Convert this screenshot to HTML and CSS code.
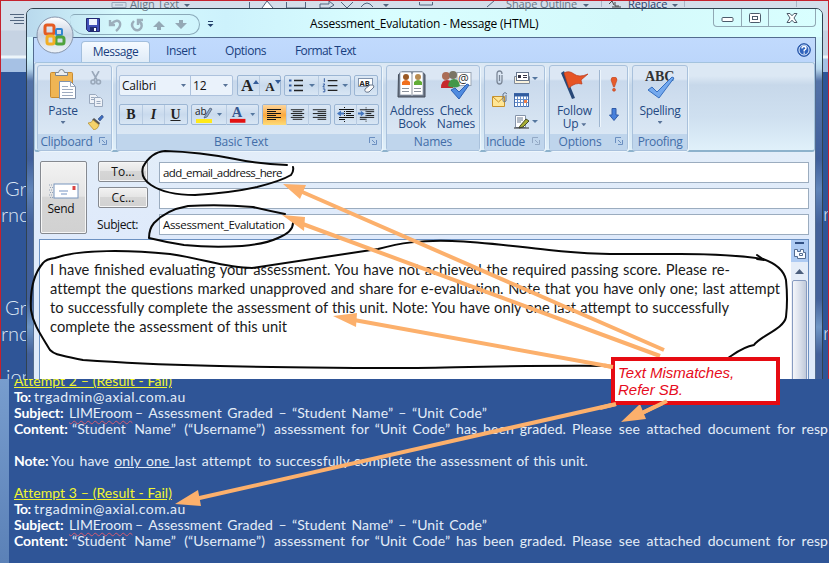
FILE: index.html
```html
<!DOCTYPE html>
<html lang="en">
<head>
<meta charset="utf-8">
<title>Assessment_Evalutation - Message (HTML)</title>
<link rel="stylesheet" href="styles.css">
</head>
<body>
<div class="stage">
  <section class="desktop">
    <div class="back-ribbon">
      <span class="back-label align-label">Align Text</span>
      <span class="back-label shape-label">Shape Outline</span>
      <span class="back-label replace-label">Replace</span>
      <svg class="back-art" width="829" height="72" viewBox="0 0 829 72" fill="none" stroke="#52657f">
        <path d="M10 14.500h14M14 17.500h10M10 20.500h14M14 23.500h10" />
        <path d="M112 2.500h14v5h-14zM115 5h8" stroke="#98a7bb"/>
        <path d="M249.500 2v6M286.500 2v6M305.500 2v6h-19M320 4h9v-3l5 4-5 3h-9zM341 2l6 6 6-6M361 7q6-8 12 0M419.500 2v3h13v-3M487 7l8-7"/>
        <path d="M262 8l5-7 6 7" fill="#fff"/>
        <path d="M383 4h6l-3 3zM583 4h6l-3 3zM672 4h6l-3 3zM184 4h6l-3 3z" fill="#52657f" stroke="none"/>
        <path d="M796.500 1v6M601.500 1v6M684.500 1v6" stroke="#a9b6c8"/>
        <path d="M609 4l3-3 2 4M615 2v4h4M612 7h9" stroke="#444"/>
      </svg>
    </div>
    <div class="back-text left-a"><span>Gr</span><br>rnc</div>
    <div class="back-text left-b"><span>Gr</span><br>rnc</div>
    <div class="back-text left-c">ion</div>
    <div class="back-text right-a">r</div>
    <div class="back-text right-b">r</div>

    <div class="window">
      <header class="titlebar">
        <div class="quick-access">
          <svg width="14" height="14" viewBox="0 0 14 14"><path d="M.5.500h13v13h-11l-2-2z" fill="#4150b8" stroke="#22276f"/><path d="M3 1h8v6H3z" fill="#eef4ff"/><path d="M4 9h7v5H4z" fill="#222c70"/><path d="M8 10h2v3H8z" fill="#fff"/></svg>
          <svg width="14" height="14" viewBox="0 0 14 14" fill="none" stroke="#9caebb" stroke-width="2.400"><path d="M2 2v5h5M3 6q7-6 9-1 1 4-4 8"/></svg>
          <svg width="14" height="14" viewBox="0 0 14 14" fill="none" stroke="#9caebb" stroke-width="2.400"><path d="M4 3Q0 7 4 11q4 3 7-1 2-4-2-7M8 7V2h5"/></svg>
          <svg width="14" height="14" viewBox="0 0 14 14" fill="#94a8b5"><path d="M7 3l6 6H9v3H5V9H1z"/></svg>
          <svg width="14" height="14" viewBox="0 0 14 14" fill="#94a8b5"><path d="M7 11l6-6H9V2H5v3H1z"/></svg>
        </div>
        <svg class="more" width="7" height="7" viewBox="0 0 7 7"><path d="M1 .500h5" stroke="#25416b"/><path d="M.5 3h6l-3 3z" fill="#25416b"/></svg>
        <h1 class="title">Assessment_Evalutation - Message (HTML)</h1>
        <div class="controls">
          <span class="ctl min"><svg width="13" height="7" viewBox="0 0 13 7"><rect x="1" y="1.500" width="11" height="4" rx="1" fill="#fff" stroke="#4c5b6b"/></svg></span>
          <span class="ctl max"><svg width="12" height="10" viewBox="0 0 12 10"><rect x=".5" y=".5" width="11" height="9" rx="1" fill="#fff" stroke="#4c5b6b"/><rect x="3.500" y="3.500" width="5" height="3" fill="#fff" stroke="#4c5b6b"/></svg></span>
          <span class="ctl close"><svg width="12" height="10" viewBox="0 0 12 10"><path d="M1 .500h3l2 2.300 2-2.300h3L8 5l3 4.500H8L6 7.200 4 9.500H1L4 5z" fill="#fff" stroke="#4c5b6b"/></svg></span>
        </div>
      </header>

      <div class="client">
        <nav class="tabs">
          <span class="tab active">Message</span>
          <span class="tab insert">Insert</span>
          <span class="tab options">Options</span>
          <span class="tab format">Format Text</span>
          <svg class="help" width="14" height="14" viewBox="0 0 14 14"><circle cx="7" cy="7" r="6.300" fill="#2f63bd" stroke="#1c4a9d"/><circle cx="7" cy="7" r="5" fill="none" stroke="#e4f0ff"/><path d="M5 5.500q0-2 2-2t2 1.700Q9 6.500 7.200 7.200V8.500M7.200 9.400v1.300" fill="none" stroke="#fff" stroke-width="1.400"/></svg>
        </nav>

        <div class="ribbon">
          <section class="group clipboard">
            <div class="group-body">
              <div class="big paste">
                <svg width="28" height="31" viewBox="0 0 28 31"><rect x="1.500" y="3.500" width="22" height="25" rx="1" fill="#f0b554" stroke="#c98c32"/><path d="M6.500 6.500v-3h3Q10 .500 12.500.500T15.500 3.500h3v3z" fill="#e9edf2" stroke="#7b8693"/><path d="M10.500 12.500h11l5 5v12h-16z" fill="#fff" stroke="#8293ac"/><path d="M21.500 12.500v5h5M13 17.500h6M13 20.500h11M13 23.500h11M13 26.500h11" fill="none" stroke="#9eabc0"/></svg>
                <span>Paste</span><i class="caret"></i>
              </div>
              <div class="small-col">
                <svg width="12" height="14" viewBox="0 0 12 14" fill="none" stroke="#9aa8ba" stroke-width="1.600"><path d="M2 0l5 9M9 0L4 9"/><circle cx="3" cy="11" r="2"/><circle cx="8.500" cy="11" r="2"/></svg>
                <svg width="16" height="14" viewBox="0 0 16 14" fill="#eef2f8" stroke="#9aa9be"><path d="M1.500 1.500h6l2 2v7h-8z"/><path d="M6.500 4.500h6l2 2v7h-8zM3 4.500h3M3 6.500h3M8.500 8.500h4M8.500 10.500h4"/></svg>
                <svg width="16" height="15" viewBox="0 0 16 15"><path d="M10 4l4-4 1.500 2L12 6z" fill="#3c6cc0" stroke="#2a3f6d" stroke-width=".5"/><path d="M6 3l6 5-1 2-7-5z" fill="#555"/><path d="M5 5l6 5q-1 4-5 5L0 8q4 0 5-3z" fill="#f5d36a" stroke="#b28b2b" stroke-width=".7"/></svg>
              </div>
            </div>
            <footer>Clipboard<svg class="launch" width="8" height="8" viewBox="0 0 8 8"><path d="M.5 6V.500H6M7.500 3v4.500H3M3 3l3 3" fill="none" stroke="#6b8fc0"/></svg></footer>
          </section>

          <section class="group basic">
            <div class="group-body rows">
              <div class="row">
                <div class="combo"><span class="font-name">Calibri<i class="caret"></i></span><span class="font-size">12<i class="caret"></i></span></div>
                <div class="set grow">
                  <b class="serif big-a">A<svg width="6" height="4" viewBox="0 0 6 4"><path d="M3 0l3 4H0z" fill="#345c99"/></svg></b>
                  <b class="serif small-a">A<svg width="6" height="4" viewBox="0 0 6 4"><path d="M0 0h6L3 4z" fill="#345c99"/></svg></b>
                </div>
                <div class="set lists">
                  <svg width="33" height="20" viewBox="0 0 33 20"><path d="M9 4.500h9M9 9.500h9M9 14.500h9" stroke="#222" stroke-width="1.300"/><path d="M4 4.500h2.500M4 9.500h2.500M4 14.500h2.500" stroke="#315aa0" stroke-width="2.200"/><path d="M24 8h6l-3 3z" fill="#55779f"/></svg>
                  <svg width="33" height="20" viewBox="0 0 33 20"><path d="M9 4.500h10M9 9.500h10M9 14.500h10" stroke="#222" stroke-width="1.300"/><path d="M5.500 2v4M4 8h2l-2 3h2M4 13h2v3H4" stroke="#315aa0" fill="none"/><path d="M24 8h6l-3 3z" fill="#55779f"/></svg>
                </div>
                <div class="set styles"><svg width="22" height="20" viewBox="0 0 22 20"><rect x="3.500" y="2.500" width="14" height="8" fill="#fff" stroke="#8193ad"/><text x="4.500" y="9.500" font-family="Open Sans" font-size="7.500" font-weight="700" fill="#222">AB</text><path d="M10 13l5-4q4-1 4 2l-5 5q-5 1-4-3z" fill="#fafafa" stroke="#67768c"/></svg></div>
              </div>
              <div class="row second">
                <div class="set biu"><b class="serif">B</b><b class="serif it">I</b><b class="serif un">U</b></div>
                <div class="set colors">
                  <svg width="34" height="20" viewBox="0 0 34 20"><text x="3" y="10" font-family="Open Sans" font-size="10" fill="#222">ab</text><path d="M18 3l-5 8-1 2 3-1 5-8z" fill="#8ea6c8" stroke="#46566d" stroke-width=".7"/><path d="M4 14h16v4H4z" fill="#ffe91a"/><path d="M25 8h5l-2.500 3z" fill="#55779f"/></svg>
                  <svg width="33" height="20" viewBox="0 0 33 20"><text x="5" y="12" font-family="Liberation Serif" font-size="15" font-weight="700" fill="#35568f">A</text><path d="M3 14h16v4H3z" fill="#e31212"/><path d="M24 8h5l-2.500 3z" fill="#55779f"/></svg>
                </div>
                <div class="set aligns">
                  <svg class="on" width="23" height="20" viewBox="0 0 23 20" stroke="#151515"><path d="M4 4.500h14M4 6.500h9M4 8.500h14M4 10.500h9M4 12.500h14M4 14.500h9"/></svg>
                  <svg width="22" height="20" viewBox="0 0 22 20" stroke="#151515"><path d="M4 4.500h14M6 6.500h10M4 8.500h14M6 10.500h10M4 12.500h14M6 14.500h10"/></svg>
                  <svg width="22" height="20" viewBox="0 0 22 20" stroke="#151515"><path d="M4 4.500h14M9 6.500h9M4 8.500h14M9 10.500h9M4 12.500h14M9 14.500h9"/></svg>
                </div>
                <div class="set indents">
                  <svg width="21" height="20" viewBox="0 0 21 20" stroke="#151515"><path d="M4 4.500h15M11 6.500h8M11 8.500h5M11 10.500h8M4 12.500h15M4 14.500h6"/><path d="M9.500 2v15" stroke-dasharray="1 1"/><path d="M2 8.500l4-3v2h3v2H6v2z" fill="#4475bd" stroke="none"/></svg>
                  <svg width="21" height="20" viewBox="0 0 21 20" stroke="#151515"><path d="M3 4.500h15M10 6.500h8M10 8.500h5M10 10.500h8M3 12.500h15M3 14.500h6"/><path d="M9.500 2v15" stroke-dasharray="1 1"/><path d="M8 8.500l-4-3v2H1v2h3v2z" fill="#4475bd" stroke="none"/></svg>
                </div>
              </div>
            </div>
            <footer>Basic Text<svg class="launch" width="8" height="8" viewBox="0 0 8 8"><path d="M.5 6V.500H6M7.500 3v4.500H3M3 3l3 3" fill="none" stroke="#6b8fc0"/></svg></footer>
          </section>

          <section class="group names">
            <div class="group-body">
              <div class="big address">
                <svg width="30" height="30" viewBox="0 0 30 30"><path d="M1.500 4.500L5 2h20l3 2.500V27h-27z" fill="#6c7685" stroke="#444d5b"/><path d="M3 2h11l1 2 1-2h10v23H16l-1 1-1-1H3z" fill="#fff" stroke="#8290a4" stroke-width=".7"/><path d="M15 3v22M5 18.500h7M5 21.500h7M17 18.500h7M17 21.500h7" stroke="#8b929d"/><circle cx="9" cy="7" r="3" fill="#9b5a25"/><path d="M5 15v-3q4-4 8 0v3z" fill="#f1701e"/><circle cx="21" cy="7" r="3" fill="#b88b50"/><path d="M17 15v-3q4-4 8 0v3z" fill="#62ad36"/></svg>
                <span>Address<br>Book</span>
              </div>
              <div class="big check">
                <svg width="32" height="30" viewBox="0 0 32 30"><rect x="17" y="2.500" width="14" height="13" fill="#fff" stroke="#9aa6b5"/><text x="18" y="13" font-family="Open Sans" font-size="12" fill="#333">@</text><circle cx="6" cy="6" r="4" fill="#aa6d57"/><path d="M1 18q0-8 6-8t6 8z" fill="#c6292d"/><circle cx="13" cy="5" r="4" fill="#7a7464"/><path d="M8 16q1-7 6-7t6 7q-6 3-12 0z" fill="#429748"/><path d="M11 20l4-2 4 4 8-8 2 1-10 14z" fill="#4f8be0" stroke="#2c60b4"/></svg>
                <span>Check<br>Names</span>
              </div>
            </div>
            <footer>Names</footer>
          </section>

          <section class="group include">
            <div class="group-body include-grid">
              <svg width="18" height="16" viewBox="0 0 18 16" fill="none" stroke="#7b8797" stroke-width="1.300"><path d="M11 5v6q0 3-2.500 3T6 11V4q0-3 2.500-3T11 4M8.500 5v6"/></svg>
              <svg width="28" height="16" viewBox="0 0 28 16"><path d="M1.500 6.500v7h15v-7z" fill="#f8f1dc" stroke="#808b9b"/><rect x="3.500" y="2.500" width="12" height="8" fill="#fff" stroke="#65758c"/><path d="M5 5h3v3H5zM10 5h4v1h-4zM10 7h4v1h-4z" fill="#334"/><path d="M19 7h6l-3 3z" fill="#55779f"/></svg>
              <svg width="18" height="16" viewBox="0 0 18 16"><path d="M1.500 4.500h12v10h-12z" fill="#ffe695" stroke="#c7922d"/><path d="M2 5l5.500 5L13 5" fill="none" stroke="#c7922d"/><path d="M15 3v6q-3 2-3-1V2q2-3 4 0" fill="none" stroke="#66758a"/></svg>
              <svg width="28" height="17" viewBox="0 0 28 17"><rect x="1.500" y="1.500" width="14" height="13" fill="#fff" stroke="#476fae"/><path d="M1 3h15" stroke="#315c9f" stroke-width="3"/><path d="M4.500 4v11M7.500 4v11M10.500 4v11M13.500 4v11M2 7.500h13M2 10.500h13" stroke="#638bc8"/><path d="M11 8h3v3h-3z" fill="#ef7e47"/></svg>
              <span></span>
              <svg width="28" height="16" viewBox="0 0 28 16"><path d="M2.500 1.500h10v12h-10z" fill="#fff" stroke="#8594aa"/><path d="M4 4h6M4 6h6M4 8h4" stroke="#68788e"/><path d="M7 12l6-7 3 2-6 6-4 1z" fill="#a6ad34" stroke="#444b28"/><path d="M1 14h15" stroke="#333"/><path d="M19 6h6l-3 3z" fill="#55779f"/></svg>
            </div>
            <footer>Include<svg class="launch" width="8" height="8" viewBox="0 0 8 8"><path d="M.5 6V.500H6M7.500 3v4.500H3M3 3l3 3" fill="none" stroke="#93a9c5"/></svg></footer>
          </section>

          <section class="group opts">
            <div class="group-body">
              <div class="big follow">
                <svg width="30" height="30" viewBox="0 0 30 30"><path d="M1 3l3-2 11 27-3 1z" fill="#284878"/><path d="M4 3q5-3 10 1t14 0l-7 6 1 4q-7-2-13 4z" fill="#e65425" stroke="#ba391b" stroke-width=".7"/></svg>
                <span>Follow<br>Up <i class="caret inline"></i></span>
              </div>
              <div class="flags">
                <svg width="8" height="15" viewBox="0 0 8 15" fill="#e65b2b" stroke="#b63d1b" stroke-width=".5"><path d="M1 3q0-3 3-3t3 3L4.500 10h-1z"/><circle cx="4" cy="12.800" r="1.500"/></svg>
                <svg width="10" height="13" viewBox="0 0 10 13"><path d="M3 .500h4V7h2.500L5 12.500.500 7H3z" fill="#4780dc" stroke="#315ba6"/></svg>
              </div>
            </div>
            <footer>Options<svg class="launch" width="8" height="8" viewBox="0 0 8 8"><path d="M.5 6V.500H6M7.500 3v4.500H3M3 3l3 3" fill="none" stroke="#6b8fc0"/></svg></footer>
          </section>

          <section class="group proof">
            <div class="group-body">
              <div class="big spelling">
                <svg width="32" height="30" viewBox="0 0 32 30"><text x="1" y="11" font-family="Liberation Serif" font-size="14" font-weight="700" textLength="29" fill="#333">ABC</text><path d="M4 20l4-3 5 5L28 7l2 1-15 20z" fill="#74a9ee" stroke="#356ec0"/></svg>
                <span>Spelling</span><i class="caret"></i>
              </div>
            </div>
            <footer>Proofing</footer>
          </section>
        </div>

        <div class="mail-header">
          <button class="send"><svg width="30" height="16" viewBox="0 0 30 16"><rect x="5" y="1" width="24" height="14" fill="#fff" stroke="#7995bd"/><path d="M10 8h9M12 11h6" stroke="#7493c2"/><path d="M23.500 3h3v4h-3z" fill="#d94545"/><path d="M0 2h4M1 4.500h3M0 7h4M1 9.500h3M0 12h4M1 14.500h3" stroke="#93a1b5" stroke-dasharray="1 1"/></svg><span>Send</span></button>
          <div class="fields">
            <button class="pick">To...</button><div class="input"><span class="to-text">add_email_address_here</span></div>
            <button class="pick">Cc...</button><div class="input"></div>
            <label>Subject:</label><div class="input"><span class="subject-text">Assessment_Evalutation</span></div>
          </div>
        </div>

        <div class="editor">
          <div class="copy">
            <p class="l1">I have finished evaluating your assessment. You have not achieved the required passing score. Please re-</p>
            <p class="l2">attempt the questions marked unapproved and share for e-evaluation. Note that you have only one; last attempt</p>
            <p class="l3">to successfully complete the assessment of this unit. Note: You have only one last attempt to successfully</p>
            <p class="l4">complete the assessment of this unit</p>
          </div>
          <div class="scroll">
            <div class="ruler"><svg width="17" height="22" viewBox="0 0 17 22"><path d="M4 3h9" stroke="#304f83" stroke-width="2"/><path d="M3.500 9.500h3v2h3v-2h3v3h2v6h-8v-2h-3z" fill="#f8fbff" stroke="#536b91"/><path d="M8.500 13.500h3v2h-3z" fill="none" stroke="#536b91"/></svg></div>
            <div class="up"><svg width="9" height="5" viewBox="0 0 9 5"><path d="M4.500 0L9 5H0z" fill="#4c5f7d"/></svg></div>
            <div class="thumb"></div>
          </div>
        </div>
      </div>
      <svg class="orb" width="38" height="38" viewBox="0 0 38 38"><defs><linearGradient id="orb" x2="0" y2="1"><stop stop-color="#fff"/><stop offset=".5" stop-color="#c9d3e2"/><stop offset="1" stop-color="#eef4fa"/></linearGradient></defs><circle cx="19" cy="19" r="18" fill="url(#orb)" stroke="#8796ad"/><g fill="none" stroke-width="3"><rect x="9" y="9" width="9" height="9" rx="2" stroke="#e45b22"/><rect x="20" y="13" width="6" height="6" rx="1" stroke="#3286cf" stroke-width="2"/><rect x="20" y="21" width="8" height="7" rx="2" stroke="#4fa33d"/><rect x="11" y="20" width="7" height="8" rx="2" stroke="#f2ae25"/></g></svg>
    </div>
  </section>

  <section class="notes">
    <p class="attempt"><u>Attempt 2 – (Result - Fail)</u></p>
    <p><b class="to">To:</b><span class="mail">trgadmin@axial.com.au</span></p>
    <p><b class="subj">Subject:</b><span class="lime">LIMEroom</span><span class="subj-rest">– Assessment Graded – “Student Name” – “Unit Code”</span></p>
    <p><b class="cont">Content:</b><span class="cont-a">“Student Name” (“Username”)</span><span class="cont-b">assessment for “Unit Code” has been graded.</span><span class="cont-c">Please see attached document for resp</span></p>
    <p></p>
    <p><b class="note">Note:</b><span class="note-a">You have <u>only one </u>last attempt</span><span class="note-b">to successfully complete the assessment of this unit.</span></p>
    <p></p>
    <p class="attempt"><u>Attempt 3 – (Result - Fail)</u></p>
    <p><b class="to">To:</b><span class="mail">trgadmin@axial.com.au</span></p>
    <p><b class="subj">Subject:</b><span class="lime">LIMEroom</span><span class="subj-rest">– Assessment Graded – “Student Name” – “Unit Code”</span></p>
    <p><b class="cont">Content:</b><span class="cont-a">“Student Name” (“Username”)</span><span class="cont-b">assessment for “Unit Code” has been graded.</span><span class="cont-c">Please see attached document for resp</span></p>
  </section>

  <svg class="ink" width="829" height="563" viewBox="0 0 829 563" fill="none">
    <g stroke="#080808" stroke-width="2" stroke-linecap="round" stroke-linejoin="round">
      <path d="M287 165Q260 164 235 159Q200 152 165 151Q151 152 143 167Q140 178 151 185Q166 195 195 195Q230 193 257 187Q281 181 291 175Q294 171 293 167"/>
      <path d="M285 214Q270 211 253 207Q220 204 188 206Q166 210 154 223Q149 229 149 238Q165 242 184 245Q212 248 242 246Q265 244 278 238Q293 232 293 223"/>
      <path d="M55 258C80 249 130 250 170 254C205 259 225 268 252 268C285 263 330 256 378 249C400 243 420 240 452 241C485 242 510 246 549 250C590 255 630 254 680 254Q730 254 763 259Q783 266 786 280Q788 300 786 317C784 329 760 336 754 345C742 347 733 355 728 358M612 366C490 365 430 369 370 368C280 367 180 367 83 360C60 355 55 355 50 350C41 335 33 324 31 310C30 292 32 276 43 263Q46 259 55 258"/>
      <path d="M757 255l7 5-7-1"/>
    </g>
    <path d="M302 227.500h1" stroke="#333"/>
    <path d="M664 350L300 191M660 356L300 223M613 367L354 320M616 404L195 499M667 401L640 414" stroke="#fcb06c" stroke-width="4"/>
    <g fill="#fcb06c"><path d="M283 184l23 1-6 14zM282 215l23 2-1 14zM333 316l24-3-1 14zM175 504l23-14 3 16zM621 422l19-18 6 15z"/></g>
  </svg>
  <aside class="callout">Text Mismatches,<br>Refer SB.</aside>
  <svg class="ink" width="829" height="563" viewBox="0 0 829 563" fill="none"><path d="M667 401L640 414M616 404L600 408M613 367L604 365.500" stroke="#fcb06c" stroke-width="4"/></svg>
</div>
</body>
</html>
```
FILE: styles.css
```css
* { box-sizing: border-box; }
body { margin: 0; overflow: hidden; }
h1, p { margin: 0; font-weight: 400; }
svg { display: block; flex: none; }
.stage { position: relative; width: 829px; height: 563px; overflow: hidden; font: 12px/14px "Open Sans", sans-serif; background: #2f5597; }

.desktop { position: relative; height: 379px; overflow: hidden; background: #2f5597; border: solid #c5212d; border-width: 1px 1px 0 1px; }
.back-ribbon { height: 71px; background: linear-gradient(#d4deea 0 29px, #c6d3e3 30px 54px, #edf5fa 55px 57px, #a6c1e4 58px); }
.back-art { position: absolute; left: -1px; top: -1px; }
.back-label { position: absolute; top: -4px; color: #687686; font-size: 11px; letter-spacing: -.1px; white-space: nowrap; z-index: 1; }
.align-label { left: 129px; }
.shape-label { left: 505px; }
.replace-label { left: 627px; color: #2a3d6b; }
.back-text { position: absolute; color: #dce6f3; font: 300 20px/26px Lato, sans-serif; }
.left-a { left: 0; top: 174px; }
.left-b { left: 0; top: 293px; }
.back-text span { padding-left: 4px; }
.left-c { left: 5px; top: 362px; }
.right-a { left: 822px; top: 199px; }
.right-b { left: 822px; top: 318px; }

.window { position: absolute; left: 25px; top: 7px; width: 797px; height: 400px; padding: 0 6px; border: 1px solid #304250; border-radius: 7px 7px 0 0; background: linear-gradient(#d3f6fc 0 30px, #c9edf8 50px, #b7d6ec 60px, #5473a8 72px, #405f9b 150px, #5f84b9 180px, #42609a 215px, #42609a 290px, #6f96c5 318px, #42609a 345px); }
.titlebar { display: flex; align-items: flex-start; height: 28px; margin: 0 -6px; background: linear-gradient(90deg, #b9d9ed, #d6fafd 12%, #cdf2fc 25%, #d9feff 45%, #d4f9fb 75%, #d9ffff); border-radius: 6px 6px 0 0; }
.quick-access { display: flex; align-items: center; gap: 8px; width: 130px; height: 21px; margin: 5px 0 0 43px; padding-left: 16px; border: 1px solid #8aa9b9; border-left: 0; border-radius: 5px 11px 11px 16px; }
.more { margin: 12px 0 0 7px; }
.title { width: 229px; margin: 7px 0 0 96px; font-size: 12px; line-height: 16px; letter-spacing: -.2px; white-space: nowrap; }
.controls { display: flex; width: 103px; height: 18px; margin: 0 0 0 174px; border: 1px solid #90a8b4; border-top: 0; border-radius: 0 0 4px 4px; }
.ctl { display: grid; place-items: center; width: 28px; border-right: 1px solid #90a8b4; }
.ctl.min { align-items: end; padding-bottom: 3px; }
.ctl.max { width: 27px; }
.ctl.close { flex: 1; border: 0; }
.orb { position: absolute; left: 9px; top: 7px; }

.client { border: 1px solid #536c8f; border-bottom: 0; width: 783px; height: 380px; background: #dfeafa; }
.tabs { display: flex; align-items: flex-start; height: 24px; padding-left: 47px; color: #183e7e; line-height: 20px; background: linear-gradient(#c1dafd, #bcd6fb); white-space: nowrap; }
.tab { flex: none; margin-top: 3px; letter-spacing: -.2px; }
.tab.active { width: 69px; height: 21px; text-align: center; letter-spacing: -.45px; border: 1px solid #a3bfdd; border-bottom: 0; border-radius: 4px 4px 0 0; background: linear-gradient(#f5faff, #dfebf7); }
.tab.insert { margin-left: 16px; width: 59px; letter-spacing: -.4px; }
.tab.options { width: 70px; letter-spacing: -.45px; }
.tab.format { width: 60px; letter-spacing: -.6px; }
.help { margin: 5px 0 0 442px; }

.ribbon { display: flex; gap: 4px; height: 90px; padding: 3px; border: 1px solid #a4c3de; border-bottom: 2px solid #8db2cc; border-radius: 3px; background: linear-gradient(#dce8f4 0 13px, #c7d8ea 22px, #cfe0f0 55px, #e0f0fa); font-size: 12px; color: #244982; }
.group { display: flex; flex-direction: column; height: 86px; margin-top: -1px; border: 1px solid #a9c1dc; border-radius: 3px; background: linear-gradient(#dce7f4 0 13px, #c9d9ec 15px, #dae7f4 68px); box-shadow: 1px 1px 0 #edf6fc; flex: none; }
.group-body { display: flex; height: 68px; }
.group footer { position: relative; height: 16px; color: #426da8; background: #bfd5ec; line-height: 16px; text-align: center; letter-spacing: -.2px; white-space: nowrap; }
.launch { position: absolute; right: 4px; top: 3px; }
.clipboard { width: 75px; margin-left: -1px; }
.clipboard footer { padding-right: 16px; letter-spacing: -.25px; }
.basic { width: 266px; }
.basic footer { padding-right: 16px; }
.names { width: 94px; }
.include { width: 61px; }
.include footer { padding-right: 18px; letter-spacing: -.3px; }
.opts { width: 79px; }
.opts footer { padding-right: 17px; }
.proof { width: 56px; }
.proof footer { letter-spacing: -.35px; }
.big { display: flex; flex-direction: column; align-items: center; padding-top: 4px; line-height: 13px; text-align: center; letter-spacing: -.2px; white-space: nowrap; }
.big span { margin-top: 4px; }
.caret { display: block; width: 5px; height: 3px; background: #587398; clip-path: polygon(0 0, 100% 0, 50% 100%); }
.caret.inline { display: inline-block; vertical-align: middle; }
.big > .caret { margin-top: 4px; }
.paste { width: 50px; padding-top: 3px; }
.small-col { display: flex; flex-direction: column; align-items: center; gap: 8px; width: 16px; padding-top: 5px; }
.address { width: 50px; }
.check { width: 38px; }
.follow { width: 49px; }
.spelling { width: 54px; letter-spacing: -.35px; }
.flags { display: flex; flex-direction: column; align-items: center; gap: 16px; width: 28px; height: 57px; margin-top: 4px; padding-top: 7px; border-left: 1px solid #9fb6d0; box-shadow: inset 1px 0 #edf5fc; }
.include-grid { display: grid; grid-template-columns: 22px 30px; grid-template-rows: 22px 22px 20px; padding: 4px 0 0 6px; }

.rows { flex-direction: column; padding: 9px 0 0 2px; }
.row { display: flex; }
.row.second { margin-top: 8px; }
.set, .combo { display: flex; height: 21px; border: 1px solid #9cb6d4; border-radius: 2px; background: linear-gradient(#dce8f5, #c9daed 50%, #d8e6f4); color: #222; }
.set > * + * { border-left: 1px solid #b8cbe1; }
.set b { display: grid; place-items: center; width: 22px; font-size: 14px; }
.serif { font-family: "Liberation Serif", serif; }
.combo { width: 114px; border-color: #adc2dd; background: #eaf2fb; color: #111; line-height: 18px; letter-spacing: -.2px; }
.combo span { display: flex; align-items: center; justify-content: space-between; padding: 0 4px 0 2px; }
.font-name { width: 71px; border-right: 1px solid #adc2dd; }
.font-size { flex: 1; }
.grow { width: 44px; margin-left: 4px; }
.set.grow b { display: flex; place-items: initial; padding-left: 3px; line-height: 20px; font-size: 17px; }
.set.grow .small-a { padding-left: 5px; font-size: 13px; line-height: 22px; }
.grow svg { margin-top: 4px; }
.lists { width: 67px; margin-left: 3px; }
.styles { width: 24px; margin-left: 3px; }
.biu { width: 69px; }
.biu .it { font-style: italic; }
.biu .un { text-decoration: underline; }
.colors { width: 68px; margin-left: 3px; }
.aligns { width: 69px; margin-left: 3px; }
.aligns .on { background: linear-gradient(#fcd59c, #fba93f 50%, #fedb76); }
.indents { width: 45px; margin-left: 3px; }

.mail-header { display: flex; height: 87px; padding: 9px 0 0 6px; color: #111; background: linear-gradient(#e2edf9, #dfeafb); }
button { font: 12px/14px "Open Sans", sans-serif; padding: 0; color: #111; border: 1px solid #858990; border-radius: 2px; background: linear-gradient(#f2f2f2, #e5e5e5 48%, #d6d6d6 50%, #d1d1d1); box-shadow: inset 0 0 0 1px #f6f6f6; }
.send { display: flex; flex-direction: column; align-items: center; width: 47px; height: 73px; padding-top: 21px; letter-spacing: -.3px; }
.send span { margin: 3px 5px 0 0; }
.fields { display: grid; grid-template-columns: 50px 650px; grid-template-rows: repeat(3, 26px); column-gap: 11px; margin-left: 11px; }
.pick { height: 21px; }
.fields label { margin: 2px 0 0 -1px; line-height: 20px; letter-spacing: -.4px; }
.input { height: 21px; margin-top: 1px; padding-left: 3px; border: 1px solid #9bacbf; background: #fff; font-size: 11.500px; line-height: 19px; white-space: nowrap; }
.to-text { letter-spacing: -.6px; }
.subject-text { letter-spacing: -.32px; }
.editor { display: flex; height: 150px; width: 770px; margin-left: 5px; border: 1px solid #6c91c2; background: #fff; }
.copy { width: 751px; padding: 20px 0 0 10px; color: #1a1a1a; font: 14.700px/19px Lato, sans-serif; }
.copy p { height: 19px; white-space: nowrap; text-align-last: justify; }
.l1 { width: 680px; }
.l2 { width: 730px; letter-spacing: -.03px; }
.l3 { width: 679px; }
.l4 { width: 237px; }
.scroll { width: 17px; background: #edf1f8; }
.ruler { height: 22px; background: #aecbf3; }
.up { display: grid; place-items: center; height: 18px; background: #e5edf8; }
.thumb { height: 120px; margin: 0 1px; border: 1px solid #879bc0; border-radius: 2px; background: linear-gradient(90deg, #f4f6fa, #dbe1ec 50%, #c0cada); }

.notes { height: 184px; padding: 0 0 0 5px; border-left: 9px solid #7197c9; border-image: linear-gradient(#789dce, #5b81b7) 1; color: #e4edf8; font: 14px/16px Lato, sans-serif; overflow: hidden; }
.notes p { display: flex; height: 16px; white-space: nowrap; position: relative; top: -6px; }
.notes .attempt { color: #f2f531; }
.attempt u { width: 158px; text-align-last: justify; letter-spacing: .05px; }
.notes span { text-align-last: justify; letter-spacing: .1px; }
.notes b { color: #fff; font-weight: 700; letter-spacing: -.05px; flex: none; }
.notes .to { width: 20px; letter-spacing: -.6px; }
.notes .mail { letter-spacing: .5px; }
.notes .subj { width: 55px; }
.notes .lime { width: 63px; letter-spacing: -.1px; text-decoration: underline wavy #d95b70 1px; text-underline-offset: 2px; }
.subj-rest { width: 352px; margin-left: 3px; }
.notes .cont { width: 58px; }
.cont-a { width: 193px; }
.cont-b { width: 292px; margin-left: 9px; }
.cont-c { width: 256px; margin-left: 6px; flex: none; }
.notes .note { width: 37px; }
.note-a { width: 200px; }
.note-b { width: 330px; margin-left: 7px; }
.ink { position: absolute; left: 0; top: 0; pointer-events: none; }
.callout { position: absolute; left: 611px; top: 357px; width: 169px; height: 48px; padding: 3px 0 0 3px; border: 4px solid #e60b12; background: #fff; color: #e60b20; font: italic 15px/17px "Liberation Sans", sans-serif; }
```
